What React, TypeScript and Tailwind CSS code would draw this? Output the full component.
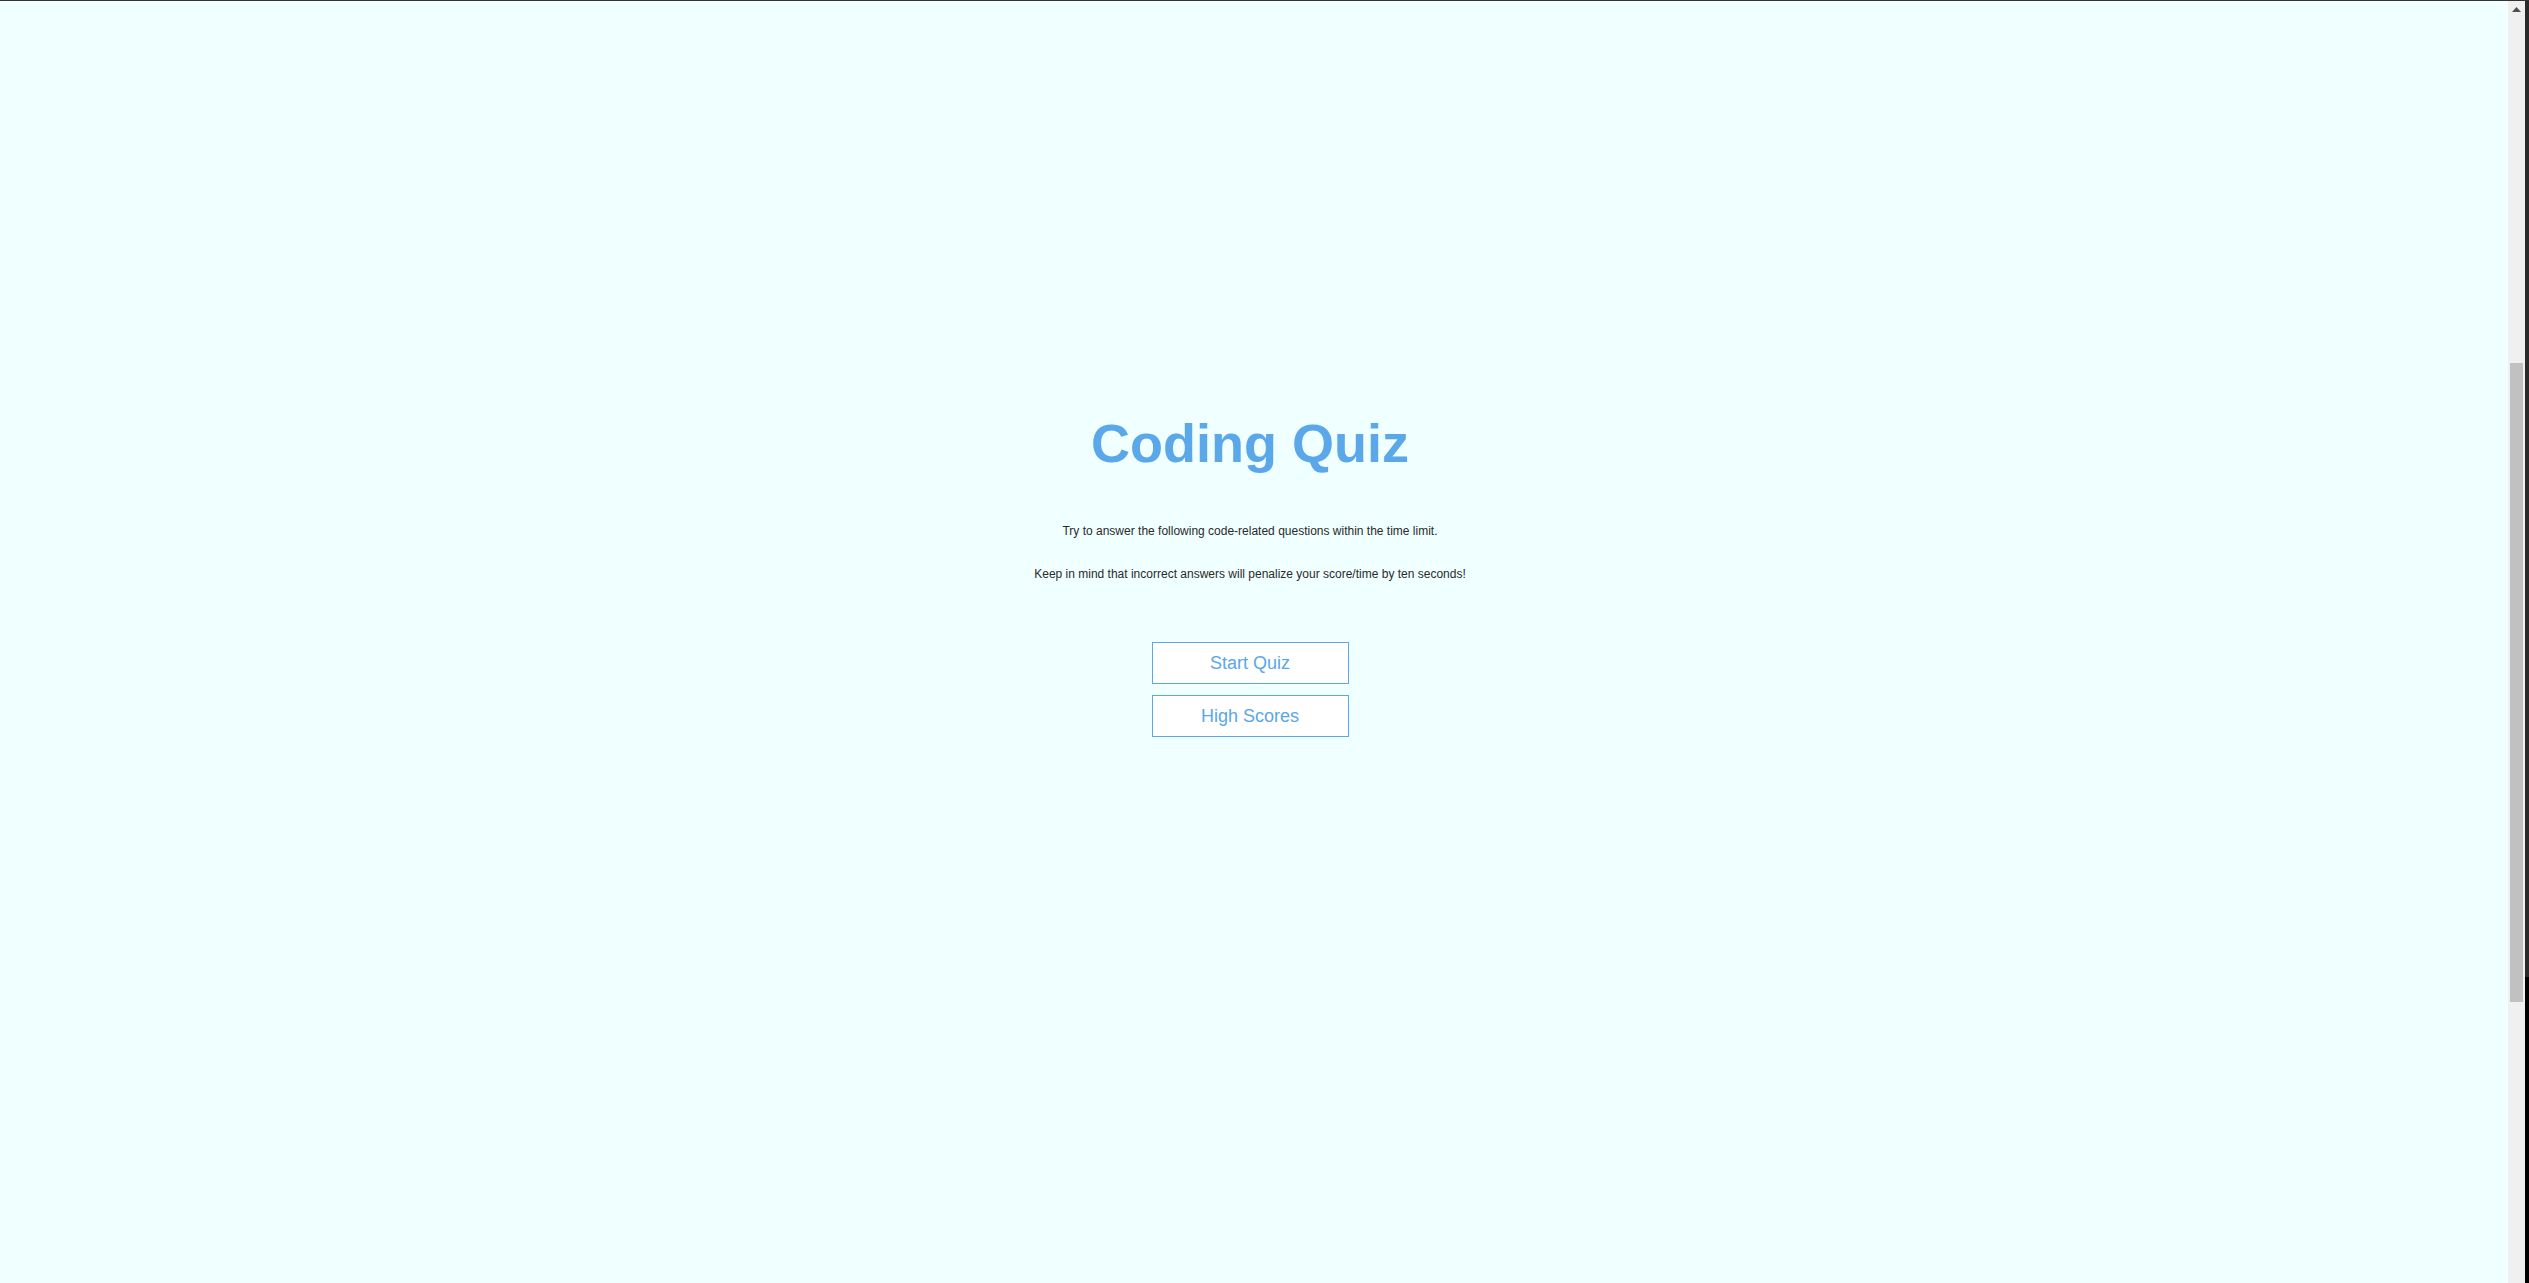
import React from "react";

const Scrollbar: React.FC = () => {
  return (
    <div className="w-[17px] h-full bg-[#f0f0f0] flex flex-col items-center">
      <div className="h-[17px] w-full flex items-center justify-center">
        <svg width="9" height="5" viewBox="0 0 9 5">
          <polygon points="0,5 9,5 4.5,0" fill="#505050" />
        </svg>
      </div>
      <div className="h-[345px]"></div>
      <div className="w-[13px] h-[639px] bg-[#c1c1c1]"></div>
    </div>
  );
};

const App: React.FC = () => {
  return (
    <div className="w-full h-[1283px] flex flex-col bg-[#f0ffff] overflow-hidden font-['Liberation_Sans',Arial,sans-serif]">
      <div className="w-full h-[1px] bg-[#333333]"></div>
      <div className="flex flex-1 w-full">
        {/* Main content */}
        <div className="flex-1 h-full flex flex-col items-center pt-[415px] pr-[8px]">
          <h1 className="text-[54px] leading-none font-bold text-[#5aa7e9]">Coding Quiz</h1>
          <p className="mt-[54px] text-[12px] leading-[14px] text-[#2a2a2a]">
            Try to answer the following code-related questions within the time limit.
          </p>
          <p className="mt-[29px] text-[12px] leading-[14px] text-[#2a2a2a]">
            Keep in mind that incorrect answers will penalize your score/time by ten seconds!
          </p>
          <div className="mt-[61px] flex flex-col gap-[11px]">
            <button className="w-[197px] h-[42px] bg-white border border-[#5aa7e9] text-[#5aa7e9] text-[18px]">
              Start Quiz
            </button>
            <button className="w-[197px] h-[42px] bg-white border border-[#5aa7e9] text-[#5aa7e9] text-[18px]">
              High Scores
            </button>
          </div>
        </div>
        <Scrollbar />
        <div className="w-[4px] h-full flex flex-col">
          <div className="h-[976px] bg-[#2a2a2a]"></div>
          <div className="flex-1 bg-black"></div>
        </div>
      </div>
    </div>
  );
};

export default App;
